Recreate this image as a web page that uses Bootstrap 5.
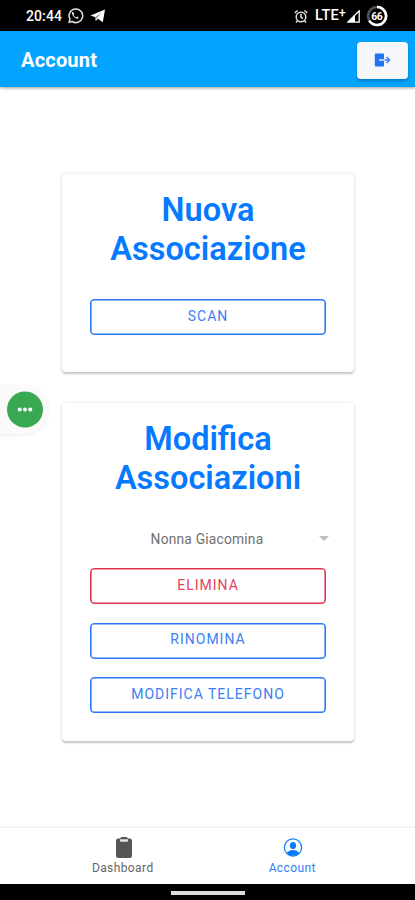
<!DOCTYPE html>
<html lang="it">
<head>
<meta charset="utf-8">
<meta name="viewport" content="width=device-width, initial-scale=1">
<title>Account</title>
<link href="https://cdn.jsdelivr.net/npm/bootstrap@5.3.0/dist/css/bootstrap.min.css" rel="stylesheet">
<style>
  body { font-family: Roboto, sans-serif; width: 415px; height: 900px; overflow: hidden; color: #666; }
  svg { display: block; flex: none; }
  .status-bar { height: 31px; padding: 1px 27px 0 26px; font-size: 14px; font-weight: 500; line-height: 1; }
  .status-bar .clock { letter-spacing: .1px; }
  .status-bar .plane { margin-left: 6px; }
  .status-bar .lte { margin-left: 7px; font-size: 14.5px; letter-spacing: .3px; }
  .status-bar .plus { font-size: 12px; line-height: 0; vertical-align: 3px; }
  .status-bar .signal { margin-left: 1px; }
  .status-bar .battery { margin-left: 6px; }
  .app-bar { height: 56px; background: #03a4ff; padding: 2px 7px 0 21px; box-shadow: 0 1px 3px rgba(0,0,0,.4); }
  .app-title { font-size: 20px; font-weight: 700; line-height: 24px; letter-spacing: .2px; }
  .btn-exit { width: 51px; height: 37px; background: #f5f7fa; border-radius: 4px; box-shadow: 0 2px 3px rgba(0,0,0,.25); }
  .content-area { padding: 87px 61px 0 62px; gap: 31px; }
  .panel { border-radius: 4px; padding: 17px 28px 0; box-shadow: 0 2px 2px rgba(0,0,0,.2), 0 0 4px rgba(0,0,0,.1); }
  .panel-new { height: 198px; }
  .panel-edit { height: 338px; padding-top: 16.5px; }
  .panel h1 { font-size: 32.5px; line-height: 39px; font-weight: 600; color: #057aff; }
  .panel-new h1 { margin-bottom: 30px; }
  .panel-edit h1 { margin-bottom: 23.5px; }
  .btn-line { height: 36px; border-width: 1px; border-radius: 4px; padding: 0 0 3px; font-size: 14px; line-height: 20px; letter-spacing: 1px; color: #3b80f3; border-color: #2b76f4; box-shadow: inset 0 0 0 .6px #2b76f4; }
  .btn-line.danger { color: #e2455c; border-color: #e0354f; box-shadow: inset 0 0 0 .6px #e0354f; }
  .actions { row-gap: 18.700px; }
  .picker { height: 36px; margin-bottom: 11px; font-size: 13.8px; color: #707070; padding-right: 2px; }
  .picker .value { letter-spacing: .2px; }
  .picker svg { right: -3px; top: 15px; }
  .bubble { left: -8px; top: 386px; width: 56px; height: 48px; border-radius: 0 24px 24px 0; background: #fafafa; box-shadow: 0 1px 4px rgba(0,0,0,.08); }
  .tab-bar { height: 58px; border-top: 2px solid #f4f4f4; font-size: 12px; line-height: 14px; padding: 0 38px; }
  .tab-item { gap: 1px; padding-top: 8px; letter-spacing: .4px; }
  .tab-item.current { color: #2f80f8; }
  .gesture-bar { height: 16px; }
  .gesture-bar span { width: 74px; height: 4px; background: #dedede; margin-top: 2px; }
</style>
</head>
<body class="d-flex flex-column position-relative bg-white">
  <div class="status-bar bg-black text-white d-flex align-items-center">
    <span class="clock">20:44</span>
    <svg class="ms-1" width="18" height="18" viewBox="0 0 18 18" fill="none" stroke="#ddd"><path d="M3.2 15.3 4 12.2A6.8 6.8 0 1 1 6.2 14.5Z" stroke-width="1.5"/><path d="M6.2 5.1c-1 1.2.6 3.8 1.7 4.8s3 2.4 4.2 1.5c.9-.7.4-1.2-.9-1.8l-1 .8C9 9.9 8.3 9.2 7.6 8l.7-1c-.5-1.500-1.100-2.400-2.100-1.900Z" fill="#ddd" stroke="none"/></svg>
    <svg class="plane" width="16" height="14" viewBox="0 0 16 14"><path d="M.5 6.500 15 .5 12.800 13.200 8 9.800 5.700 12 5.300 8.300Z" fill="#fff"/><path d="m5.300 8.300 6.700-5-5.400 5.700-.9 3" fill="#888"/></svg>
    <svg class="ms-auto" width="14" height="15" viewBox="0 0 14 15" fill="none" stroke="#ddd" stroke-width="1.500"><circle cx="7" cy="8" r="4.800"/><path d="M7 5v3.300l2 1.200M.8 3.900 3.600 1.500M10.400 1.500l2.800 2.400M3.300 12 2 13.500M10.700 12l1.300 1.500"/></svg>
    <span class="lte">LTE<span class="plus">+</span></span>
    <svg class="signal" width="13" height="13" viewBox="0 0 13 13"><path d="M.8 12.200H12.200V.8Z" fill="none" stroke="#fff" stroke-width="1.300"/><path d="M1 12 8 5v7Z" fill="#fff"/></svg>
    <svg class="battery" width="22" height="22" viewBox="0 0 22 22"><circle cx="11" cy="11" r="9" fill="none" stroke="#555" stroke-width="2.500"/><path d="M11 2A9 9 0 1 1 3.300 15.600" fill="none" stroke="#fff" stroke-width="2.700"/><text x="10.700" y="15" text-anchor="middle" font-size="10.500" font-weight="700" letter-spacing="-.5" fill="#fff">66</text></svg>
  </div>

  <header class="app-bar d-flex align-items-center justify-content-between">
    <span class="app-title text-white">Account</span>
    <button class="btn btn-exit border-0 p-0 d-flex align-items-center justify-content-center" aria-label="Esci">
      <svg width="17" height="14" viewBox="0 0 17 14"><path d="M1.800.5h7.200q1 0 1 1v11q0 1-1 1H1.800Q.8 13.500.8 12.500V1.500Q.8.5 1.800.5Z" fill="#2372f2"/><path d="M5 7h5" stroke="#fff" stroke-width="1.300"/><path d="M10.500 7h5M12.500 4l3 3-3 3" fill="none" stroke="#3b82f6" stroke-width="1.500"/></svg>
    </button>
  </header>

  <main class="content-area d-flex flex-column flex-grow-1">
    <section class="panel panel-new bg-white text-center">
      <h1>Nuova Associazione</h1>
      <button class="btn btn-line w-100">SCAN</button>
    </section>
    <section class="panel panel-edit bg-white text-center">
      <h1>Modifica Associazioni</h1>
      <div class="picker position-relative d-flex align-items-center justify-content-center">
        <span class="value">Nonna Giacomina</span>
        <svg class="position-absolute" width="10" height="5" viewBox="0 0 10 5"><path d="M0 0h10L5 5Z" fill="#bdbdbd"/></svg>
      </div>
      <div class="actions d-grid">
        <button class="btn btn-line danger">ELIMINA</button>
        <button class="btn btn-line">RINOMINA</button>
        <button class="btn btn-line">MODIFICA TELEFONO</button>
      </div>
    </section>
  </main>

  <div class="bubble position-absolute">
    <svg width="56" height="48" viewBox="0 0 56 48"><circle cx="33" cy="23.500" r="18" fill="#38a853"/><g fill="#fff"><circle cx="27.700" cy="23.500" r="2"/><circle cx="33" cy="23.500" r="2"/><circle cx="38.300" cy="23.500" r="2"/></g></svg>
  </div>

  <nav class="tab-bar bg-white d-flex">
    <div class="tab-item w-50 d-flex flex-column align-items-center">
      <svg width="22" height="24" viewBox="0 0 22 24"><path d="M6 2.500h2Q8.500 1 10 1h4q1.500 0 2 1.500h1.500Q20 2.500 20 5v14.500q0 2.500-2.500 2.500H6.500Q4 22 4 19.500V5Q4 2.500 6 2.500Z" fill="#555"/><path d="M8 3.200h8V5q0 .8-.8.8H8.800Q8 5.800 8 5Z" fill="#e4e4e4"/></svg>
      <span>Dashboard</span>
    </div>
    <div class="tab-item current w-50 d-flex flex-column align-items-center">
      <svg width="22" height="24" viewBox="0 0 22 24"><circle cx="12" cy="11.500" r="8.600" fill="none" stroke="#087bfa" stroke-width="1.200"/><ellipse cx="12" cy="9.500" rx="3.100" ry="3.500" fill="#087bfa"/><path d="M5.700 17C7 15 9.500 14 12 14s5 1 6.300 3A8.400 8.400 0 0 1 5.700 17Z" fill="#087bfa"/></svg>
      <span>Account</span>
    </div>
  </nav>
  <div class="gesture-bar bg-black d-flex align-items-center justify-content-center"><span></span></div>
<script src="https://cdn.jsdelivr.net/npm/bootstrap@5.3.0/dist/js/bootstrap.bundle.min.js"></script>
</body>
</html>
